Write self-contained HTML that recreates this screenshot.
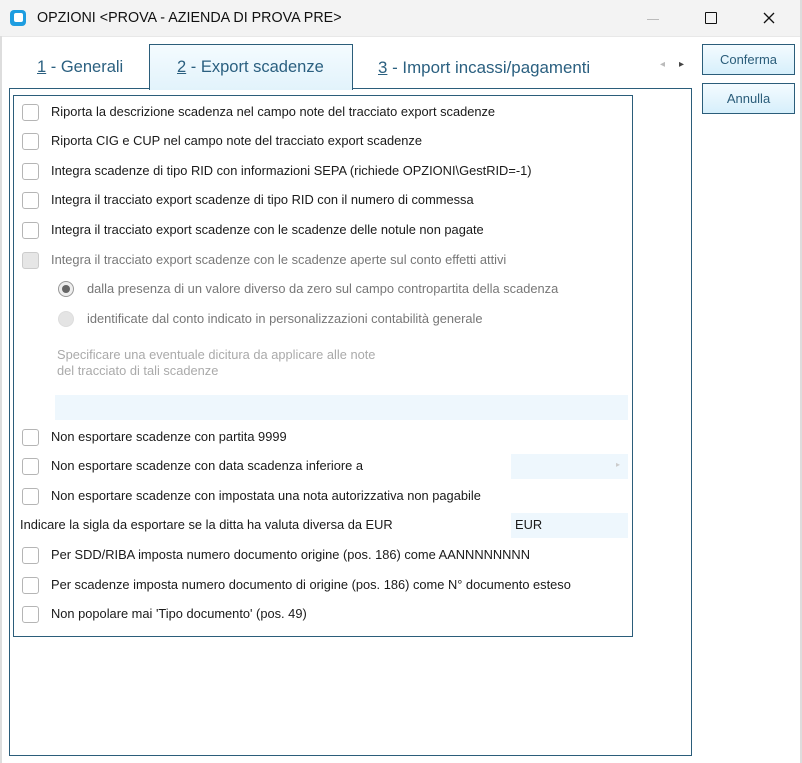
<!DOCTYPE html>
<html><head><style>
body{margin:0;width:802px;height:763px;background:#fff;font-family:"Liberation Sans",sans-serif;position:relative;overflow:hidden}
.a{position:absolute}
.title{left:0;top:0;width:802px;height:36px;background:#f3f3f3;border-bottom:1px solid #e8e8e8}
.cb{position:absolute;left:22px;width:15px;height:15px;border:1px solid #b5b5b5;border-radius:3px;background:#fff}
.t{position:absolute;left:51px;font-size:12.85px;color:#1a1a1a;white-space:nowrap;line-height:16px}
.btn{position:absolute;left:702px;width:91px;height:29px;border:1px solid #2b5d7a;background:linear-gradient(#f4fbff,#d6effb);color:#2b5d7a;font-size:13px;text-align:center;line-height:29px}
.tab{position:absolute;top:58px;font-size:16.5px;color:#2b6080}
</style></head><body>
<div class="a title"></div>
<div class="a" style="left:10px;top:10px;width:16px;height:16px;border-radius:4px;background:#1e9de0"></div>
<div class="a" style="left:14px;top:13px;width:9px;height:9px;border-radius:2px;background:#fff"></div>
<div class="a" style="left:37px;top:10px;font-size:14.3px;color:#111">OPZIONI &lt;PROVA - AZIENDA DI PROVA PRE&gt;</div>
<div class="a" style="left:647px;top:19px;width:12px;height:1px;background:#bbb"></div>
<div class="a" style="left:705px;top:12px;width:10px;height:10px;border:1.5px solid #111;border-radius:1px"></div>
<svg class="a" style="left:763px;top:12px" width="12" height="12"><path d="M1 1L11 11M11 1L1 11" stroke="#111" stroke-width="1.3"/></svg>
<div class="a" style="left:0;top:36px;width:2px;height:727px;background:#ddd"></div>
<div class="a" style="left:800px;top:0;width:2px;height:763px;background:#ddd"></div>

<div class="a" style="left:149px;top:44px;width:202px;height:45px;border:1px solid #2b5d7a;border-bottom:none;background:linear-gradient(#f4fbff,#e2f3fb);z-index:2"></div>
<div class="tab" style="left:37px"><u>1</u> - Generali</div>
<div class="tab" style="left:177px;z-index:3"><u>2</u> - Export scadenze</div>
<div class="tab" style="left:378px;font-size:16.9px"><u>3</u> - Import incassi/pagamenti</div>
<div class="a" style="left:660px;top:59px;font-size:10px;color:#bbb">◂</div>
<div class="a" style="left:679px;top:59px;font-size:10px;color:#444">▸</div>
<div class="a" style="left:9px;top:88px;width:681px;height:666px;border:1px solid #2b5d7a"></div>
<div class="a" style="left:13px;top:95px;width:618px;height:540px;border:1px solid #2b5d7a"></div>
<div class="btn" style="top:44px">Conferma</div>
<div class="btn" style="top:83px">Annulla</div>

<div class="cb" style="top:104px"></div><div class="t" style="top:104px">Riporta la descrizione scadenza nel campo note del tracciato export scadenze</div>
<div class="cb" style="top:133px"></div><div class="t" style="top:133px">Riporta CIG e CUP nel campo note del tracciato export scadenze</div>
<div class="cb" style="top:163px"></div><div class="t" style="top:163px">Integra scadenze di tipo RID con informazioni SEPA (richiede OPZIONI\GestRID=-1)</div>
<div class="cb" style="top:192px"></div><div class="t" style="top:192px">Integra il tracciato export scadenze di tipo RID con il numero di commessa</div>
<div class="cb" style="top:222px"></div><div class="t" style="top:222px">Integra il tracciato export scadenze con le scadenze delle notule non pagate</div>
<div class="cb" style="top:252px;background:#e6e6e6;border-color:#ccc"></div><div class="t" style="top:252px;color:#777">Integra il tracciato export scadenze con le scadenze aperte sul conto effetti attivi</div>
<div class="a" style="left:58px;top:281px;width:14px;height:14px;border:1px solid #999;border-radius:50%;background:#eee"></div>
<div class="a" style="left:62px;top:285px;width:8px;height:8px;border-radius:50%;background:#666"></div>
<div class="t" style="left:87px;top:281px;color:#777">dalla presenza di un valore diverso da zero sul campo contropartita della scadenza</div>
<div class="a" style="left:58px;top:311px;width:14px;height:14px;border:1px solid #ddd;border-radius:50%;background:#e4e4e4"></div>
<div class="t" style="left:87px;top:311px;color:#777">identificate dal conto indicato in personalizzazioni contabilità generale</div>
<div class="t" style="left:57px;top:347px;color:#aaa">Specificare una eventuale dicitura da applicare alle note<br>del tracciato di tali scadenze</div>
<div class="a" style="left:55px;top:395px;width:573px;height:25px;background:#eef7fd"></div>
<div class="cb" style="top:429px"></div><div class="t" style="top:429px">Non esportare scadenze con partita 9999</div>
<div class="cb" style="top:458px"></div><div class="t" style="top:458px">Non esportare scadenze con data scadenza inferiore a</div>
<div class="a" style="left:511px;top:454px;width:117px;height:25px;background:#eef7fd"></div>
<div class="a" style="left:616px;top:460px;font-size:8px;color:#ccc">▸</div>
<div class="cb" style="top:488px"></div><div class="t" style="top:488px">Non esportare scadenze con impostata una nota autorizzativa non pagabile</div>
<div class="t" style="left:20px;top:517px">Indicare la sigla da esportare se la ditta ha valuta diversa da EUR</div>
<div class="a" style="left:511px;top:513px;width:117px;height:25px;background:#eef7fd"></div>
<div class="t" style="left:515px;top:517px">EUR</div>
<div class="cb" style="top:547px"></div><div class="t" style="top:547px">Per SDD/RIBA imposta numero documento origine (pos. 186) come AANNNNNNNN</div>
<div class="cb" style="top:577px"></div><div class="t" style="top:577px">Per scadenze imposta numero documento di origine (pos. 186) come N° documento esteso</div>
<div class="cb" style="top:606px"></div><div class="t" style="top:606px">Non popolare mai 'Tipo documento' (pos. 49)</div>
</body></html>
